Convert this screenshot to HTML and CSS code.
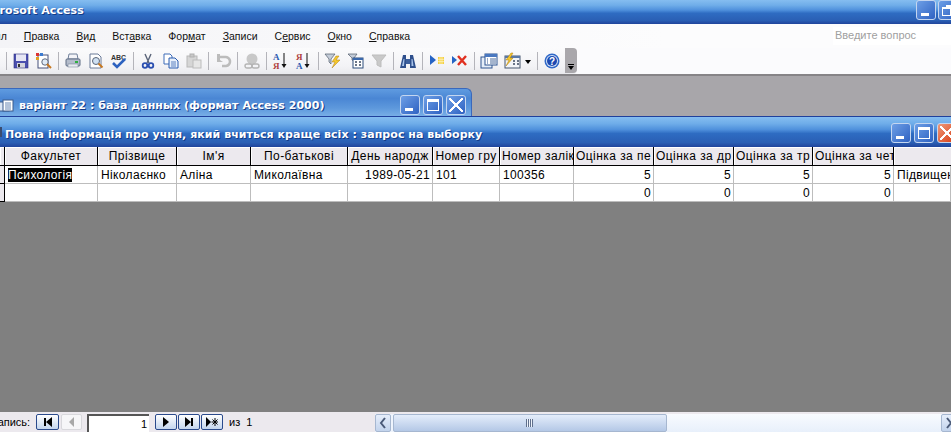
FILE: index.html
```html
<!DOCTYPE html>
<html lang="uk">
<head>
<meta charset="utf-8">
<title>Microsoft Access</title>
<link rel="stylesheet" href="styles.css">
</head>
<body>
<div class="app">
  <header class="titlebar">
    <span class="apptitle">Microsoft Access</span>
    <div class="winbtns appbtns">
      <span class="wb"><i class="min"></i></span>
      <span class="wb"><i class="rest"></i></span>
    </div>
  </header>
  <nav class="menubar">
    <span class="mi first">Файл</span>
    <span class="mi"><u>П</u>равка</span>
    <span class="mi"><u>В</u>ид</span>
    <span class="mi">Вст<u>а</u>вка</span>
    <span class="mi">Фор<u>м</u>ат</span>
    <span class="mi"><u>З</u>аписи</span>
    <span class="mi">С<u>е</u>рвис</span>
    <span class="mi"><u>О</u>кно</span>
    <span class="mi"><u>С</u>правка</span>
    <span class="ask">Введите вопрос</span>
  </nav>
  <div class="toolrow">
    <div class="toolbar">
      <span class="sep"></span>
      <span class="tb"><svg viewBox="0 0 16 16"><rect x="1" y="1" width="14" height="14" fill="#4b4fae"/><rect x="3" y="1" width="10" height="7" fill="#e6e6f4"/><rect x="4" y="10" width="8" height="5" fill="#d5d5dd"/><rect x="5" y="11" width="2" height="3" fill="#333"/><rect x="1" y="1" width="14" height="14" fill="none" stroke="#2c2f80" stroke-width=".6"/></svg></span>
      <span class="tb"><svg viewBox="0 0 16 16"><rect x="2" y="2" width="10" height="13" fill="#fff" stroke="#46507a"/><rect x="0" y="0" width="3" height="3" fill="#d33"/><rect x="4" y="0" width="3" height="3" fill="#3a7ad0"/><rect x="0" y="4" width="3" height="3" fill="#e0a020"/><circle cx="9" cy="9" r="3.2" fill="#dfeaf6" stroke="#606a80"/><path d="M11 11l4 4" stroke="#c87820" stroke-width="2"/></svg></span>
      <span class="sep"></span>
      <span class="tb"><svg viewBox="0 0 16 16"><path d="M4 1h8l1 5H3z" fill="#f4f4f8" stroke="#70809a"/><rect x="1" y="6" width="14" height="7" rx="1" fill="#b4bccb" stroke="#5f6c84"/><rect x="3" y="11" width="10" height="3" fill="#e8ebf0" stroke="#6b7890" stroke-width=".5"/><rect x="10" y="8" width="3" height="2" fill="#2fb040"/></svg></span>
      <span class="tb"><svg viewBox="0 0 16 16"><path d="M2 1h8l3 3v11H2z" fill="#fff" stroke="#6a7a98"/><circle cx="8" cy="8" r="3.5" fill="#cfe0f2" stroke="#5a6578"/><path d="M10.5 10.5l4 4" stroke="#c87820" stroke-width="2"/></svg></span>
      <span class="tb"><svg viewBox="0 0 16 16"><text x="0" y="6.5" class="abc">ABC</text><path d="M2 10l4 4 8-8" fill="none" stroke="#2d62c0" stroke-width="2.6"/></svg></span>
      <span class="sep"></span>
      <span class="tb"><svg viewBox="0 0 16 16"><path d="M5 1l4 9M11 1L7 10" stroke="#5a6478" stroke-width="1.4"/><circle cx="5" cy="12.5" r="2.3" fill="none" stroke="#2b4fb0" stroke-width="1.8"/><circle cx="11" cy="12.5" r="2.3" fill="none" stroke="#2b4fb0" stroke-width="1.8"/></svg></span>
      <span class="tb"><svg viewBox="0 0 16 16"><path d="M1 1h6l2 2v8H1z" fill="#fff" stroke="#3f6cb8"/><path d="M6 5h6l3 3v7H6z" fill="#e8f0fb" stroke="#2b5cb0"/><path d="M8 9h5M8 11h5M8 13h5" stroke="#5b80c0"/></svg></span>
      <span class="tb"><svg viewBox="0 0 16 16"><rect x="1" y="3" width="10" height="11" fill="#d6d6d6" stroke="#b8b8b8"/><rect x="4" y="1" width="4" height="3" fill="#c8c8c8" stroke="#b0b0b0"/><rect x="7" y="7" width="8" height="8" fill="#e6e6e6" stroke="#bcbcbc"/></svg></span>
      <span class="sep"></span>
      <span class="tb"><svg viewBox="0 0 16 16"><path d="M5 4h5a3.500 3.500 0 0 1 1 9H7" fill="none" stroke="#bcbcbc" stroke-width="2.600"/><path d="M2 1h3v6l3 2H2z" fill="#bcbcbc"/></svg></span>
      <span class="sep"></span>
      <span class="tb"><svg viewBox="0 0 16 16"><circle cx="8" cy="6" r="5.500" fill="#c8c8c8"/><rect x="1" y="11" width="7" height="4" rx="2" fill="none" stroke="#b4b4b4" stroke-width="1.400"/><rect x="8" y="11" width="7" height="4" rx="2" fill="none" stroke="#b4b4b4" stroke-width="1.400"/></svg></span>
      <span class="sep"></span>
      <span class="tb"><svg viewBox="0 0 16 16"><text x="0" y="7" class="sa">A</text><text x="0" y="15.500" class="sy">Я</text><path d="M11 0v12" stroke="#111"/><path d="M8.500 11h5L11 15z" fill="#111"/></svg></span>
      <span class="tb"><svg viewBox="0 0 16 16"><text x="0" y="7" class="sy">Я</text><text x="0" y="15.500" class="sa">A</text><path d="M11 0v12" stroke="#111"/><path d="M8.500 11h5L11 15z" fill="#111"/></svg></span>
      <span class="sep"></span>
      <span class="tb"><svg viewBox="0 0 16 16"><path d="M0 1h10L6 6v5L4 9V6z" fill="#c4ccd8" stroke="#525c6c" stroke-width=".7"/><path d="M11 3L7 9h3l-3 6 8-8h-4l3-4z" fill="#f5c92c" stroke="#b07c10" stroke-width=".5"/></svg></span>
      <span class="tb"><svg viewBox="0 0 16 16"><path d="M0 1h9L6 5v3L4 7V5z" fill="#c4ccd8" stroke="#525c6c" stroke-width=".7"/><rect x="5" y="5" width="10" height="10" fill="#fff" stroke="#2f4f7c"/><rect x="5" y="5" width="10" height="2" fill="#3a68ac"/><path d="M7 9h2M11 9h2M7 12h2M11 12h2" stroke="#3c4a60" stroke-width="1.400"/></svg></span>
      <span class="tb"><svg viewBox="0 0 16 16"><path d="M1 2h14L10 8v6L6 12V8z" fill="#c9c9c9" stroke="#bdbdbd"/></svg></span>
      <span class="sep"></span>
      <span class="tb"><svg viewBox="0 0 16 16"><path d="M3 2h3v13H0zM10 2h3l3 13h-6z" fill="#2e4f8c"/><rect x="6" y="6" width="4" height="5" fill="#3c5f9c"/><path d="M3.500 6L2 13h2l.500-7zM11.500 6v7h2L12.500 6z" fill="#a9c4ea"/></svg></span>
      <span class="sep"></span>
      <span class="tb"><svg viewBox="0 0 16 16"><path d="M1 2l6 5-6 5z" fill="#2563c4"/><path d="M9 4h6v7H9z" fill="#f4d040"/><path d="M11 4v7M13 4v7M9 6.300h6M9 8.600h6" stroke="#fff6c8" stroke-width=".7"/></svg></span>
      <span class="tb"><svg viewBox="0 0 16 16"><path d="M0 3l5 4-5 4z" fill="#2563c4"/><path d="M6 3l8 9M14 3l-8 9" stroke="#e03020" stroke-width="2.400"/></svg></span>
      <span class="sep"></span>
      <span class="tb"><svg viewBox="0 0 16 16"><rect x="0" y="4" width="11" height="11" fill="#e6eef8" stroke="#2f5590"/><rect x="4" y="1" width="12" height="11" fill="#fff" stroke="#2f5590"/><rect x="4" y="1" width="12" height="3" fill="#4a78c0"/><path d="M9 6h6M9 8h6M9 10h6" stroke="#4a6a9c"/><path d="M6 6h1M6 8h1M6 10h1" stroke="#2f5590"/></svg></span>
      <span class="tb"><svg viewBox="0 0 16 16"><rect x="1" y="3" width="15" height="12" fill="#f2f4f8" stroke="#46566e"/><rect x="1" y="3" width="15" height="2" fill="#5878a8"/><path d="M9 8h2M13 8h2M9 11h2M13 11h2" stroke="#3c4a60" stroke-width="1.500"/><path d="M7 0L2 7h3l-3 6 7-8H6l3-5z" fill="#f5c92c" stroke="#b07c10" stroke-width=".5"/></svg></span>
      <span class="drop"></span>
      <span class="sep"></span>
      <span class="tb"><svg viewBox="0 0 16 16"><circle cx="8" cy="8" r="7.500" fill="#3068c8"/><circle cx="8" cy="8" r="6" fill="#d4e2f6"/><circle cx="8" cy="8" r="5" fill="#1c48b0"/><text x="8" y="12" class="help">?</text></svg></span>
      <span class="grip"><i></i><b></b></span>
    </div>
  </div>
  <main class="mdi">
    <div class="docwin">
      <svg class="docicon" viewBox="0 0 14 14"><rect x="-1" y="3" width="10" height="9" fill="#dce6f4" stroke="#3a5a8c"/><rect x="3" y="1" width="10" height="11" fill="#fff" stroke="#3a5a8c"/><path d="M5 4h6M5 6h6M5 8h6M5 10h6" stroke="#6a88b4"/></svg>
      <span class="doctitle">варіант 22 : база данных (формат Access 2000)</span>
      <div class="winbtns docbtns">
        <span class="wb"><i class="min"></i></span>
        <span class="wb"><i class="max"></i></span>
        <span class="wb"><i class="cls"></i></span>
      </div>
    </div>
    <section class="querywin">
      <div class="qtitle">
        <span class="qmark"></span>
        <span class="qtext">Повна інформація про учня, який вчиться краще всіх : запрос на выборку</span>
        <div class="winbtns qbtns">
          <span class="wb"><i class="min"></i></span>
          <span class="wb"><i class="max"></i></span>
          <span class="wb red"><i class="cls"></i></span>
        </div>
      </div>
      <div class="grid">
        <div class="hd sel"></div>
        <div class="hd">Факультет</div>
        <div class="hd">Прізвище</div>
        <div class="hd">Ім'я</div>
        <div class="hd">По-батькові</div>
        <div class="hd">День народж</div>
        <div class="hd">Номер гру</div>
        <div class="hd">Номер залік</div>
        <div class="hd">Оцінка за пе</div>
        <div class="hd">Оцінка за др</div>
        <div class="hd">Оцінка за тр</div>
        <div class="hd">Оцінка за чет</div>
        <div class="hd last"></div>

        <div class="rs"></div>
        <div class="c"><span class="hl">Психологія</span></div>
        <div class="c">Ніколаєнко</div>
        <div class="c">Аліна</div>
        <div class="c">Миколаївна</div>
        <div class="c n">1989-05-21</div>
        <div class="c">101</div>
        <div class="c">100356</div>
        <div class="c n">5</div>
        <div class="c n">5</div>
        <div class="c n">5</div>
        <div class="c n">5</div>
        <div class="c">Підвищена</div>

        <div class="rs"></div>
        <div class="c"></div>
        <div class="c"></div>
        <div class="c"></div>
        <div class="c"></div>
        <div class="c"></div>
        <div class="c"></div>
        <div class="c"></div>
        <div class="c n">0</div>
        <div class="c n">0</div>
        <div class="c n">0</div>
        <div class="c n">0</div>
        <div class="c"></div>
      </div>
      <div class="fill"></div>
      <footer class="status">
        <span class="reclabel">Запись:</span>
        <span class="nb"><svg viewBox="0 0 12 12"><path d="M2 2h2v8H2zM10 1v10L4 6z" fill="#000"/></svg></span>
        <span class="nb off"><svg viewBox="0 0 12 12"><path d="M8 1v10L3 6z" fill="#a8a8a8"/></svg></span>
        <span class="recno">1</span>
        <span class="nb"><svg viewBox="0 0 12 12"><path d="M3 1v10l6-5z" fill="#000"/></svg></span>
        <span class="nb"><svg viewBox="0 0 12 12"><path d="M2 1v10l6-5zM8 2h2v8H8z" fill="#000"/></svg></span>
        <span class="nb"><svg viewBox="0 0 12 12"><path d="M0 1v10l5-5z" fill="#000"/><path d="M9 2v8M5.500 6h7M6.500 3.500l5 5M11.500 3.500l-5 5" stroke="#000"/></svg></span>
        <span class="recof">из&nbsp; 1</span>
        <div class="hscroll">
          <span class="sb"><svg viewBox="0 0 10 12"><path d="M7 1L3 6l4 5" fill="none" stroke="#4a5a78" stroke-width="2"/></svg></span>
          <span class="thumb"><i></i></span>
          <span class="track"></span>
          <span class="sb end"><svg viewBox="0 0 10 12"><path d="M3 1l4 5-4 5" fill="none" stroke="#4a5a78" stroke-width="2"/></svg></span>
        </div>
      </footer>
    </section>
  </main>
</div>
</body>
</html>
```
FILE: styles.css
```css
* { box-sizing: border-box; }
html, body { margin: 0; height: 100%; overflow: hidden; }
body { font-family: "Liberation Sans", Arial, sans-serif; font-size: 12px; color: #000; }
.app { width: 951px; height: 432px; display: flex; flex-direction: column; overflow: hidden; }

.titlebar, .qtitle {
  background: linear-gradient(#85bdf0 0, #6fade9 22%, #4f90dc 42%, #2e6cc2 55%, #2a5fb4 85%, #20449c 100%);
}
.titlebar { height: 24px; flex: none; display: flex; align-items: flex-start; overflow: hidden; }
.apptitle, .doctitle, .qtext {
  font-family: "DejaVu Sans", sans-serif; font-weight: 700; color: #fff;
  white-space: nowrap; text-shadow: 1px 1px 0 #123a86;
}
.apptitle { font-size: 11px; margin-left: -22px; margin-top: 4px; letter-spacing: .1px; }

.winbtns { display: flex; margin-left: auto; flex: none; }
.wb {
  width: 20px; height: 20px; border: 1px solid #c4d6f0; border-radius: 3px;
  background: linear-gradient(135deg, #6d9fe6, #2f62c2);
  position: relative; flex: none; display: block;
}
.wb.red { background: linear-gradient(135deg, #ee9a7a, #d83c14); }
.wb i { position: absolute; display: block; }
.wb .min { left: 4px; bottom: 3px; width: 8px; height: 3px; background: #fff; }
.wb .max { left: 3px; top: 3px; width: 12px; height: 12px; border: 1px solid #fff; border-top-width: 3px; }
.wb .rest { left: 3px; top: 6px; width: 9px; height: 9px; border: 1px solid #fff; border-top-width: 2px; box-shadow: 3px -3px 0 -1px #fff; }
.wb .cls { left: 2px; top: 2px; width: 14px; height: 14px;
  background:
    linear-gradient(45deg, transparent 43%, #fff 43%, #fff 57%, transparent 57%),
    linear-gradient(-45deg, transparent 43%, #fff 43%, #fff 57%, transparent 57%);
}
.appbtns { gap: 2px; width: 35px; overflow: hidden; }

.menubar {
  height: 24px; flex: none; display: flex; align-items: center; gap: 17px;
  background: linear-gradient(90deg, #f4f4f7, #fcfcfd 70%);
  font-family: "Liberation Sans", sans-serif; font-size: 10.5px; padding-bottom: 1px;
}
.mi { white-space: nowrap; color: #111; }
.mi.first { margin-left: -19px; }
.ask {
  margin-left: auto; width: 118px; height: 18px; background: #fff; color: #a0a0a0;
  padding-left: 2px; line-height: 17px; font-size: 11px;
}

.toolrow { height: 28px; flex: none; background: #fbfbfd; border-bottom: 2px solid #868487; }
.toolbar {
  width: 577px; height: 26px; display: flex; align-items: center; padding: 0 0 1px 3px;
  background: linear-gradient(#fbfbfc, #f3f3f6 70%, #e9e9ed);
  border-radius: 0 4px 4px 0; position: relative;
}
.tb { width: 23px; height: 24px; flex: none; display: flex; align-items: center; justify-content: center; }
.tb svg { width: 16px; height: 16px; display: block; overflow: visible; }
.sep { width: 6px; height: 18px; flex: none; display: block; position: relative; }
.sep::after { content: ""; position: absolute; left: 3px; top: 0; width: 1px; height: 18px; background: #b4b4ba; }
.drop { width: 11px; height: 24px; flex: none; position: relative; }
.drop::after { content: ""; position: absolute; left: 2px; top: 11px; border: 3px solid transparent; border-top: 4px solid #000; }
.abc { font: 700 7px "Liberation Sans", sans-serif; fill: #333; }
.sa { font: 700 9px "Liberation Serif", serif; fill: #2a5ab0; }
.sy { font: 700 9px "Liberation Serif", serif; fill: #b04040; }
.help { font: 700 10px "Liberation Sans", sans-serif; fill: #fff; text-anchor: middle; }
.grip {
  margin-left: auto; width: 12px; height: 25px; background: #a9a7ab; border-radius: 0 4px 4px 0;
  position: relative; flex: none;
}
.grip i { position: absolute; left: 3px; bottom: 8px; width: 6px; height: 1px; background: #000; }
.grip b { position: absolute; left: 3px; bottom: 3px; border: 3px solid transparent; border-top: 4px solid #000; border-bottom: 0; }

.mdi { flex: 1; min-height: 0; display: flex; flex-direction: column; background: #a8a6aa; padding-top: 12px; }
.docwin {
  width: 472px; height: 28px; flex: none; display: flex; align-items: flex-start; position: relative;
  border: 1px solid #3a68bc; border-left: 0; border-bottom: 0; border-radius: 0 6px 0 0;
  background: linear-gradient(#5f9be0, #4a86d4 35%, #5d98dc 70%, #78aee6);
  padding: 6px 5px 0 0;
}
.docicon { width: 14px; height: 14px; flex: none; margin-top: 4px; }
.doctitle { font-size: 11px; margin-left: 5px; margin-top: 4px; letter-spacing: .05px; }
.docbtns { gap: 3px; }

.querywin { flex: 1; min-height: 0; display: flex; flex-direction: column; }
.qtitle {
  height: 31px; flex: none; display: flex; align-items: flex-start; border-top: 1px solid #20409c;
  padding-top: 6px; overflow: hidden;
}
.qmark { width: 2px; height: 10px; background: #3a4c70; flex: none; margin-top: 4px; }
.qtext { font-size: 11px; margin-left: 3px; margin-top: 5px; letter-spacing: .05px; }
.qbtns { gap: 3px; width: 60px; overflow: hidden; }

.grid {
  display: grid; flex: none; background: #fff;
  grid-template-columns: 5px 93px 79px 74px 97px 85px 67px 74px 80px 80px 79px 81px 57px;
  grid-template-rows: 19px 18px 18px;
  font-family: "Liberation Sans", sans-serif; font-size: 12px;
}
.hd {
  background: #ece9ee; border-right: 1px solid #000; border-bottom: 1px solid #000;
  box-shadow: inset 1px 1px 0 #fff; text-align: center; line-height: 19px;
  white-space: nowrap; overflow: hidden; padding: 0 2px; letter-spacing: .45px; font-weight: 400;
}
.hd.last { border-right: 0; }
.hd.sel { padding: 0; }
.rs { background: #ece9ee; border-right: 1px solid #000; border-bottom: 1px solid #000; }
.c {
  border-right: 1px solid #bdbdbd; border-bottom: 1px solid #bdbdbd; line-height: 17px; padding-top: 1px;
  white-space: nowrap; overflow: hidden; padding-left: 3px; padding-right: 2px; letter-spacing: .35px;
}
.c.n { text-align: right; }
.hl { background: #000; color: #fff; display: inline-block; height: 14px; line-height: 14px; margin-top: 1px; vertical-align: top; }

.fill { flex: 1; min-height: 0; background: #808080; }

.status {
  height: 20px; flex: none; background: #ece9ee; display: flex; align-items: flex-start; padding-top: 2px;
  font-family: "Liberation Sans", sans-serif; font-size: 11px; position: relative;
}
.reclabel { margin-left: -9px; width: 39px; margin-right: 6px; white-space: nowrap; flex: none; line-height: 16px; }
.nb {
  width: 23px; height: 16px; flex: none; display: flex; align-items: center; justify-content: center;
  border: 1px solid #2a4a8c; border-radius: 2px; background: linear-gradient(#fff, #c4d6ee);
}
.nb svg { width: 12px; height: 12px; display: block; }
.nb.off { margin-left: 2px; width: 21px; background: #f6f6f8; border-color: #d8d8dc; }
.recno {
  width: 62px; height: 18px; margin: 0 6px 0 5px; flex: none; background: #fff; text-align: right;
  padding-right: 2px; line-height: 17px; border-top: 2px solid #555; border-left: 2px solid #555;
}
.recno ~ .nb { width: 22px; margin-right: 1px; }
.recof { margin-left: 5px; line-height: 16px; white-space: nowrap; }
.hscroll { position: absolute; left: 375px; right: 0; top: 2px; height: 18px; display: flex; background: #eef4fd; }
.sb {
  width: 16px; height: 18px; flex: none; border: 1px solid #a6b7d0; border-radius: 2px;
  background: linear-gradient(#e6eefb, #c2d3ec); display: flex; align-items: center; justify-content: center;
}
.sb svg { width: 10px; height: 12px; display: block; }
.sb.end { margin-right: -6px; }
.thumb {
  width: 274px; height: 18px; margin-left: 2px; flex: none; border: 1px solid #a6b7d0; border-radius: 2px;
  background: linear-gradient(#e4edfb, #b4c8e6); position: relative;
}
.thumb i {
  position: absolute; left: 132px; top: 4px; width: 7px; height: 8px;
  background: repeating-linear-gradient(90deg, #5f6f8c 0, #5f6f8c 1px, #eef3fb 1px, #eef3fb 2px);
}
.track { flex: 1; background: linear-gradient(#f8fbff, #e8f0fb); }
```
